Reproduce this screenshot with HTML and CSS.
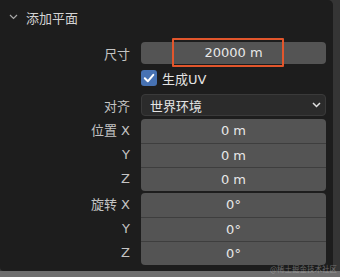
FILE: index.html
```html
<!DOCTYPE html>
<html lang="zh">
<head>
<meta charset="utf-8">
<link rel="stylesheet" href="styles.css">
</head>
<body>
<div class="panel">
  <div class="header">
    <svg class="hchev" width="9" height="6" viewBox="0 0 9 6"><path d="M1 1 L4.5 4.5 L8 1" fill="none" stroke="#a8a8a8" stroke-width="1.2"/></svg>
    <span class="title">添加平面</span>
  </div>

  <div class="row row-size">
    <div class="label">尺寸</div>
    <div class="field single">20000 m<span class="hl"></span></div>
  </div>

  <div class="row row-check">
    <div class="label"></div>
    <div class="check">
      <svg width="16" height="16" viewBox="0 0 16 16"><rect x="0" y="0" width="16" height="16" rx="3" fill="#4772b3"/><path d="M3.8 8.3 L6.8 11.3 L12.3 4.8" fill="none" stroke="#ffffff" stroke-width="2" stroke-linecap="round" stroke-linejoin="round"/></svg>
      <span>生成UV</span>
    </div>
  </div>

  <div class="row row-drop">
    <div class="label">对齐</div>
    <div class="drop"><span>世界环境</span>
      <svg width="9" height="6" viewBox="0 0 9 6"><path d="M1 1 L4.5 4.5 L8 1" fill="none" stroke="#e0e0e0" stroke-width="1.5"/></svg>
    </div>
  </div>

  <div class="group g-pos">
    <div class="labels">
      <div class="label">位置 X</div>
      <div class="label">Y</div>
      <div class="label">Z</div>
    </div>
    <div class="stack">
      <div class="cell">0 m</div>
      <div class="cell">0 m</div>
      <div class="cell">0 m</div>
    </div>
  </div>

  <div class="group g-rot">
    <div class="labels">
      <div class="label">旋转 X</div>
      <div class="label">Y</div>
      <div class="label">Z</div>
    </div>
    <div class="stack">
      <div class="cell">0°</div>
      <div class="cell">0°</div>
      <div class="cell">0°</div>
    </div>
  </div>
</div>
<div class="bottom"></div>
<div class="wm">@稀土掘金技术社区</div>
</body>
</html>
```

FILE: styles.css
```css
html, body {
  margin: 0;
  padding: 0;
}
body {
  width: 340px;
  height: 277px;
  overflow: hidden;
  background: #353535;
  font-family: "DejaVu Sans", "Noto Sans CJK SC", sans-serif;
  font-size: 13px;
  position: relative;
}
.panel {
  width: 333px;
  height: 271px;
  box-sizing: border-box;
  background: #1d1d1d;
  border-radius: 0 5px 5px 4px;
  padding-right: 7px;
}
.header {
  height: 34px;
  display: flex;
  align-items: center;
  padding-left: 9px;
  gap: 8px;
  color: #d4d4d4;
}
.title {
  font-size: 13px;
  letter-spacing: 0;
}
.row {
  display: flex;
  align-items: center;
}
.label {
  width: 130px;
  text-align: right;
  color: #c4c4c4;
  flex: none;
  white-space: pre;
}
.row .label {
  margin-right: 11px;
}
.row-size {
  margin-top: 8px;
  height: 22px;
}
.field {
  flex: 1;
  height: 22px;
  line-height: 22px;
  background: #545454;
  color: #e8e8e8;
  text-align: center;
  border-radius: 4px;
  position: relative;
}
.hl {
  position: absolute;
  left: 31px;
  top: -4px;
  width: 112px;
  height: 29px;
  box-sizing: border-box;
  border: 2px solid #e2562c;
  border-radius: 1px;
}
.row-check {
  height: 28px;
}
.check {
  display: flex;
  align-items: center;
  gap: 5px;
  color: #e4e4e4;
}
.check svg {
  display: block;
}
.row-drop {
  margin-top: 2px;
  height: 22px;
}
.drop {
  flex: 1;
  height: 22px;
  box-sizing: border-box;
  background: #2b2b2b;
  border: 1px solid #3a3a3a;
  border-radius: 4px;
  display: flex;
  align-items: center;
  justify-content: space-between;
  padding: 0 4px 0 8px;
  color: #e4e4e4;
}
.drop svg {
  display: block;
}
.group {
  display: flex;
}
.g-pos {
  margin-top: 3px;
}
.g-rot {
  margin-top: 2px;
}
.labels {
  width: 130px;
  margin-right: 11px;
  display: flex;
  flex-direction: column;
}
.labels .label {
  height: 24px;
  line-height: 24px;
}
.stack {
  flex: 1;
  display: flex;
  flex-direction: column;
  border-radius: 4px;
  overflow: hidden;
  background: #545454;
}
.cell {
  height: 24px;
  line-height: 24px;
  text-align: center;
  color: #e8e8e8;
  box-sizing: border-box;
}
.cell + .cell {
  border-top: 1px solid #3e3e3e;
  line-height: 23px;
}
.bottom {
  height: 6px;
  background: #6e6e6e;
}
.wm {
  position: absolute;
  right: 3px;
  bottom: 3px;
  font-size: 7.5px;
  color: rgba(200, 200, 200, 0.45);
  font-family: "Noto Sans CJK SC", sans-serif;
}
```
